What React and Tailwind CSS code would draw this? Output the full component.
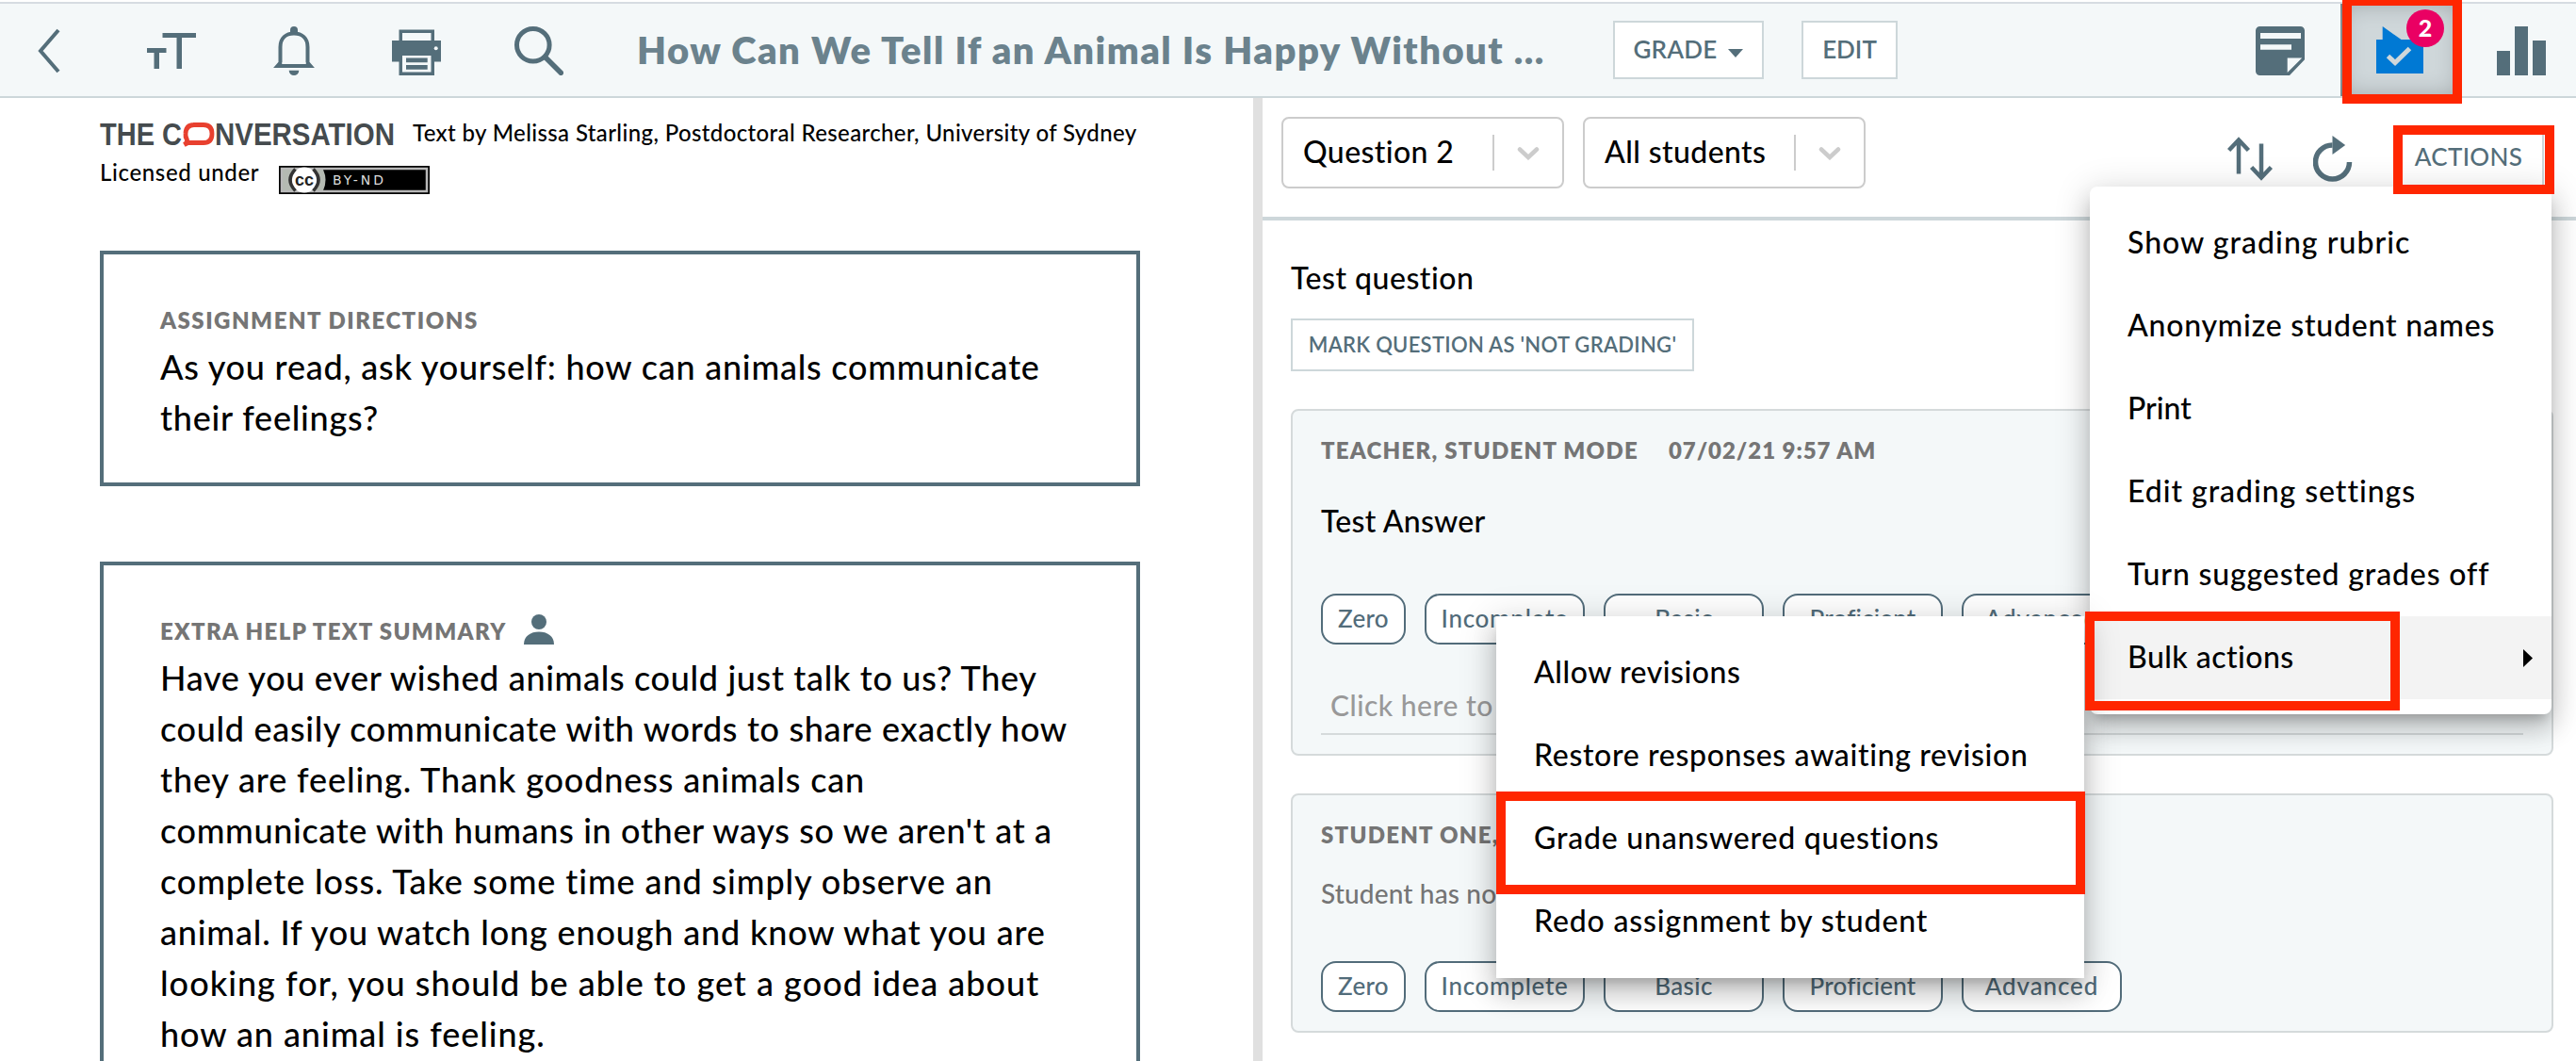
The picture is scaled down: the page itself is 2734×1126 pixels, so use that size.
import React, { useState } from 'react'
import clsx from 'clsx'

const summaryLines = [
  { text: 'Have you ever wished animals could just talk to us? They', tracking: 'tracking-[0.66px]' },
  { text: 'could easily communicate with words to share exactly how', tracking: 'tracking-[0.68px]' },
  { text: 'they are feeling. Thank goodness animals can', tracking: 'tracking-[0.87px]' },
  { text: "communicate with humans in other ways so we aren't at a", tracking: 'tracking-[0.65px]' },
  { text: 'complete loss. Take some time and simply observe an', tracking: 'tracking-[0.9px]' },
  { text: 'animal. If you watch long enough and know what you are', tracking: 'tracking-[0.82px]' },
  { text: 'looking for, you should be able to get a good idea about', tracking: 'tracking-[1.02px]' },
  { text: 'how an animal is feeling.', tracking: 'tracking-[0.94px]' },
]

const actionItems = [
  { label: 'Show grading rubric', tracking: 'tracking-[1.03px]' },
  { label: 'Anonymize student names', tracking: 'tracking-[0.78px]' },
  { label: 'Print', tracking: 'tracking-normal' },
  { label: 'Edit grading settings', tracking: 'tracking-[0.95px]' },
  { label: 'Turn suggested grades off', tracking: 'tracking-[0.85px]' },
  { label: 'Bulk actions', tracking: 'tracking-[0.45px]' },
]

const bulkItems = [
  { label: 'Allow revisions', tracking: 'tracking-[0.53px]' },
  { label: 'Restore responses awaiting revision', tracking: 'tracking-[0.66px]' },
  { label: 'Grade unanswered questions', tracking: 'tracking-[0.8px]' },
  { label: 'Redo assignment by student', tracking: 'tracking-[0.84px]' },
]

const grades = [
  { label: 'Zero', className: 'w-[90px] tracking-[0.3px]' },
  { label: 'Incomplete', className: 'w-[170px] tracking-[0.7px]' },
  { label: 'Basic', className: 'w-[170px] tracking-[0.4px]' },
  { label: 'Proficient', className: 'w-[170px] tracking-[0.2px]' },
  { label: 'Advanced', className: 'w-[170px] tracking-[0.9px]' },
]

const BackIcon = () => (
  <svg className="w-[26px] h-[50px]" viewBox="0 0 26 50" fill="none" stroke="currentColor" strokeWidth="4">
    <path d="M23 3 L4 25 L23 47" />
  </svg>
)

const TextSizeIcon = () => (
  <svg className="w-[52px] h-[52px]" viewBox="0 0 52 52" fill="currentColor">
    <path d="M16.5 7H52v5H37v33h-5.5V12h-15z" />
    <path d="M0 23h20.5v5H13v17H7.5V28H0z" />
  </svg>
)

const BellIcon = () => (
  <svg className="w-[44px] h-[52px]" viewBox="0 0 44 52">
    <path d="M18 8V4a4 4 0 0 1 8 0v4z" fill="currentColor" />
    <path d="M4.500 42L7.500 38.500V22C7.500 12.500 13.500 7.500 22 7.500S36.500 12.500 36.500 22V38.500L39.500 42Z" fill="none" stroke="currentColor" strokeWidth="4" />
    <path d="M0.500 44L6 38.500L10 40H34L38 38.500L43.500 44Z" fill="currentColor" />
    <path d="M9.500 38H34.500V39.800H9.500Z" className="fill-[#f4f8f9]" />
    <path d="M16.700 46.700H27.300a5.300 5.300 0 0 1-10.600 0z" fill="currentColor" />
  </svg>
)

const PrinterIcon = () => (
  <svg className="w-[52px] h-[52px]" viewBox="0 0 52 52">
    <path d="M7.500 3.500H45V15h7v22.500h-7V52H7.500V37.500H0V15h7.500z" fill="currentColor" />
    <path d="M11 7h30.500v8H11zM11 31h30.500v17.500H11z" className="fill-[#f4f8f9]" />
    <path d="M15 33.500h22.700v4.700H15zM15 41h22.700v4.700H15z" fill="currentColor" />
    <circle cx="46.700" cy="23.300" r="2" className="fill-[#f4f8f9]" />
  </svg>
)

const SearchIcon = () => (
  <svg className="w-[52px] h-[52px]" viewBox="0 0 52 52" fill="none" stroke="currentColor" strokeWidth="5">
    <circle cx="19.800" cy="19.800" r="17.300" />
    <path d="M33 33L49.300 49.300" strokeWidth="5.500" strokeLinecap="round" />
  </svg>
)

const NoteIcon = () => (
  <svg className="w-[52px] h-[52px]" viewBox="0 0 52 52">
    <path d="M4.500 0h43A4.500 4.500 0 0 1 52 4.500V35.300L36 52H4.500A4.500 4.500 0 0 1 0 47.500v-43A4.500 4.500 0 0 1 4.500 0z" fill="currentColor" />
    <path d="M5 7h43v6H5zM5 19.200h33v5.600H5zM33.700 33.500h15.500L33.700 49z" className="fill-[#f4f8f9]" />
  </svg>
)

const GradeTrayIcon = () => (
  <svg className="w-[50px] h-[50px]" viewBox="0 0 50 50">
    <path d="M0 14H6.700V0L26.500 14H50V50H0z" className="fill-[#0079d4]" />
    <path d="M12.500 31.500L20 38.500L35.500 23.500" fill="none" className="stroke-[#cfd7da]" strokeWidth="5" />
  </svg>
)

const BarsIcon = () => (
  <svg className="w-[52px] h-[52px]" viewBox="0 0 52 52" fill="currentColor">
    <path d="M0 26h14v26H0zM19 0h14v52H19zM38 15h14v37H38z" />
  </svg>
)

const SortIcon = () => (
  <svg className="w-[48px] h-[48px]" viewBox="0 0 48 48" fill="none" stroke="currentColor" strokeWidth="4.500">
    <path d="M12 39.500V3M1.600 14.500L12 3.500L22.400 14.500" />
    <path d="M36 7.500V44M25.600 32.500L36 43.500L46.400 32.500" />
  </svg>
)

const RefreshIcon = () => (
  <svg className="w-[42px] h-[50px]" viewBox="0 0 42 50">
    <path d="M38.500 28A18 18 0 1 1 20.500 10" fill="none" stroke="currentColor" strokeWidth="5.500" />
    <path d="M20.500 0L34.200 10L20.500 20z" fill="currentColor" />
  </svg>
)

const PersonIcon = () => (
  <svg className="w-[32px] h-[32px]" viewBox="0 0 32 32" fill="currentColor">
    <circle cx="16" cy="8" r="8" />
    <path d="M0 32C0 23 7 18.500 16 18.500S32 23 32 32z" />
  </svg>
)

const ConversationLogo = () => (
  <svg className="w-[312px] h-[24px] overflow-visible" viewBox="0 0 312 24">
    <g className="fill-[#454b4e] font-['Liberation_Sans',sans-serif] font-bold text-[33px]">
      <text x="0" y="23.800" textLength="87" lengthAdjust="spacingAndGlyphs">THE C</text>
      <text x="122" y="23.800" textLength="191" lengthAdjust="spacingAndGlyphs">NVERSATION</text>
    </g>
    <path d="M99 2.500H110Q119 2.500 119 12T110 21.500H93.500L89.500 23.500Q93 21 92.500 18.500Q90.500 15 91 11.500Q91.500 2.500 100 2.500" fill="none" className="stroke-[#e8402f]" strokeWidth="4.800" />
  </svg>
)

const LicenseBadge = () => (
  <svg className="w-[160px] h-[30px]" viewBox="0 0 160 30">
    <rect width="160" height="30" fill="#000" />
    <rect x="3" y="3" width="154" height="24" fill="none" className="stroke-[#b9b9b9]" strokeWidth="2.500" />
    <path d="M4 4H47Q52 15 47 26H4z" className="fill-[#b4bab2]" />
    <circle cx="27" cy="15" r="13.500" fill="#fff" />
    <path d="M17.500 3.500Q6.500 15 17.500 26.500M36.500 3.500Q47.500 15 36.500 26.500" fill="none" stroke="#333" strokeWidth="3.500" />
    <text x="17" y="20.500" textLength="20" className="fill-[#222] font-['Liberation_Sans',sans-serif] font-bold text-[18px]">cc</text>
    <text x="57" y="20" textLength="54" className="fill-[#ddd] font-['DejaVu_Sans',sans-serif] text-[14px]">BY-ND</text>
  </svg>
)

const Select = ({ label }) => (
  <div className="w-[300px] h-[76px] border-2 border-[#cccccc] rounded-lg bg-white flex items-center">
    <span className="flex-1 pl-[21px] pb-[2px] text-[32px] tracking-[0.4px]">{label}</span>
    <span className="w-[2px] h-[38px] bg-[#cccccc]" />
    <svg className="w-[24px] h-[14px] ml-[24px] mr-[24px] mt-[2px]" viewBox="0 0 24 14" fill="none" stroke="#ccc" strokeWidth="4.500" strokeLinecap="round">
      <path d="M3 2.500L12 11L21 2.500" />
    </svg>
  </div>
)

const GradeButtons = () => (
  <div className="flex gap-5">
    {grades.map((grade) => (
      <button
        key={grade.label}
        className={clsx('h-[54px] pb-px border-2 border-[#526c7a] rounded-2xl bg-white text-[#526c7a] text-[26px] whitespace-nowrap', grade.className)}
      >
        {grade.label}
      </button>
    ))}
  </div>
)

const TopBar = () => (
  <header className="h-[102px] shrink-0 flex items-center bg-[#f4f8f9] border-t-2 border-t-[#d6dce2] border-b-2 border-b-[#cdd7da] text-[#546e7a]">
    <div className="flex items-center pl-[39px] pt-[2px]">
      <BackIcon />
      <div className="flex items-center ml-[91px]">
        <TextSizeIcon />
        <div className="ml-[82px]"><BellIcon /></div>
        <div className="ml-[82px]"><PrinterIcon /></div>
        <div className="ml-[78px]"><SearchIcon /></div>
      </div>
    </div>
    <h1 className="ml-[78px] w-[1036px] shrink-0 text-[40px] font-extrabold tracking-[1.45px] text-[#6b828d] whitespace-nowrap">
      How Can We Tell If an Animal Is Happy Without ...
    </h1>
    <button className="w-[160px] h-[62px] pb-px pr-[1px] flex items-center justify-center border-2 border-[#cdd7da] bg-white text-[26px] font-semibold tracking-[0.2px]">
      GRADE
      <svg className="w-[16px] h-[9px] ml-[11px] mt-[7px]" viewBox="0 0 16 9" fill="currentColor">
        <path d="M0 0h16L8 9z" />
      </svg>
    </button>
    <button className="ml-10 w-[102px] h-[62px] pb-px border-2 border-[#cdd7da] bg-white text-[26px] font-semibold">EDIT</button>
    <div className="ml-auto h-full flex items-center pr-8">
      <div className="mt-[2px]"><NoteIcon /></div>
      <div className="relative ml-[38px] w-[126px] h-full pl-[38px] pt-6 bg-[#cfd7da] shadow-[inset_0_0_24px_rgba(0,0,0,0.25),inset_3px_0_0_#96a2a8]">
        <GradeTrayIcon />
        <span className="absolute left-[70px] top-[6px] w-10 h-10 rounded-full bg-[#ea0063] text-white text-[25px] leading-[39px] font-black text-center">2</span>
      </div>
      <div className="ml-10 mt-[2px]"><BarsIcon /></div>
    </div>
  </header>
)

const ReadingPane = () => (
  <section className="w-[1330px] shrink-0 pl-[106px] pt-4">
    <div className="text-[24px] leading-[42px] whitespace-nowrap">
      <div className="flex">
        <div className="pt-[10px]"><ConversationLogo /></div>
        <span className="ml-5 tracking-[0.37px]">Text by Melissa Starling, Postdoctoral Researcher, University of Sydney</span>
      </div>
      <div className="flex h-[42px]">
        <span className="w-[190px] tracking-[0.65px]">Licensed under</span>
        <div className="pt-[14px]"><LicenseBadge /></div>
      </div>
    </div>

    <div className="mt-[62px] w-[1104px] h-[250px] border-4 border-[#546e7a] px-[60px] pt-[55px] whitespace-nowrap">
      <h2 className="text-[24px] leading-[30px] font-extrabold tracking-[1.5px] text-[#757575]">ASSIGNMENT DIRECTIONS</h2>
      <p className="mt-[7px] text-[36px] leading-[54px] tracking-[0.77px]">
        As you read, ask yourself: how can animals communicate
        <br />
        their feelings?
      </p>
    </div>

    <div className="mt-20 w-[1104px] h-[700px] border-4 border-[#546e7a] px-[60px] pt-[55px] whitespace-nowrap">
      <div className="flex h-[30px] text-[#546e7a]">
        <h2 className="w-[386px] text-[24px] leading-[30px] font-extrabold tracking-[1.35px] text-[#757575]">EXTRA HELP TEXT SUMMARY</h2>
        <div className="-mt-[3px]"><PersonIcon /></div>
      </div>
      <div className="mt-[7px] text-[36px] leading-[54px]">
        {summaryLines.map((line) => <p key={line.text} className={line.tracking}>{line.text}</p>)}
      </div>
    </div>
  </section>
)

const GradingPane = () => (
  <section className="flex-1 min-w-0">
    <div className="h-[130px] border-b-4 border-[#cdd7da] pl-5 pr-[34px] pt-5 flex items-start text-[#546e7a]">
      <div className="flex gap-5 text-black">
        <Select label="Question 2" />
        <Select label="All students" />
      </div>
      <div className="ml-auto flex items-start">
        <div className="mt-[21px]"><SortIcon /></div>
        <div className="mt-5 ml-[43px]"><RefreshIcon /></div>
        <button className="mt-3 ml-[43px] w-[160px] h-[62px] pb-px border-2 border-[#cdd7da] bg-white text-[26px] font-medium tracking-[0.3px]">ACTIONS</button>
      </div>
    </div>

    <div className="pl-[30px] pr-6 pt-[41px]">
      <p className="text-[32px] leading-10 tracking-[0.5px]">Test question</p>
      <button className="mt-[23px] w-[428px] h-14 pb-px border-2 border-[#cdd7da] text-[22px] font-semibold tracking-[0.28px] text-[#546e7a] whitespace-nowrap">
        MARK QUESTION AS 'NOT GRADING'
      </button>

      <article className="mt-10 h-[368px] border-2 border-[#d5dadb] rounded-lg bg-[#f4f8f9] px-[30px] pt-7">
        <h3 className="flex gap-8 text-[24px] leading-7 font-extrabold text-[#757575]">
          <span className="tracking-[1.25px]">TEACHER, STUDENT MODE</span>
          <span className="tracking-[0.95px]">07/02/21 9:57 AM</span>
        </h3>
        <p className="mt-[41px] mb-[57px] text-[32px] leading-10 tracking-[0.25px]">Test Answer</p>
        <GradeButtons />
        <div className="mt-11 pl-[10px] pb-[10px] border-b-2 border-[#d5dadb] text-[30px] leading-10 tracking-[0.5px] text-[#999]">Click here to comment</div>
      </article>

      <article className="mt-10 h-[254px] border-2 border-[#d5dadb] rounded-lg bg-[#f4f8f9] px-[30px] pt-7">
        <h3 className="text-[24px] leading-7 font-extrabold tracking-[1.25px] text-[#757575]">STUDENT ONE, TEST</h3>
        <p className="mt-[30px] mb-[54px] text-[28px] leading-9 tracking-[0.15px] text-[#757575]">Student has not answered</p>
        <GradeButtons />
      </article>
    </div>
  </section>
)

const menuShadow = 'shadow-[0_10px_12px_-6px_rgba(0,0,0,0.2),0_16px_24px_2px_rgba(0,0,0,0.14),0_6px_36px_4px_rgba(0,0,0,0.14)]'

const App = () => {
  const [active, setActive] = useState('Bulk actions')

  return (
    <div className="relative w-[2734px] h-[1126px] overflow-hidden bg-white pt-[2px] flex flex-col text-black font-['Lato',sans-serif] font-medium">
      <TopBar />
      <main className="flex-1 min-h-0 flex overflow-hidden">
        <ReadingPane />
        <div className="w-[10px] shrink-0 bg-[#e0e0e0]" />
        <GradingPane />
      </main>

      {/* Actions menu */}
      <ul className={clsx('absolute left-[2218px] top-[198px] w-[490px] py-4 bg-white rounded-lg', menuShadow)}>
        {actionItems.map(({ label, tracking }) => (
          <li
            key={label}
            onMouseEnter={() => setActive(label)}
            className={clsx('h-[88px] pl-[40px] pr-5 pb-[2px] flex items-center justify-between text-[32px] whitespace-nowrap', tracking, label === active && 'bg-[#f3f3f3]')}
          >
            {label}
            {label === 'Bulk actions' && (
              <svg className="w-[10px] h-[19px] mt-[2px]" viewBox="0 0 10 19"><path d="M0 0L10 9.500L0 19z" /></svg>
            )}
          </li>
        ))}
      </ul>

      {/* Bulk actions submenu */}
      <ul className={clsx('absolute left-[1588px] top-[654px] w-[624px] py-4 bg-white', menuShadow)}>
        {bulkItems.map(({ label, tracking }) => (
          <li key={label} className={clsx('h-[88px] pl-[40px] pb-[2px] flex items-center text-[32px] whitespace-nowrap', tracking)}>{label}</li>
        ))}
      </ul>

      {/* Highlights */}
      <div className="absolute left-[2486px] -top-1 w-[127px] h-[114px] border-10 border-[#ff2600]" />
      <div className="absolute left-[2540px] top-[133px] w-[171px] h-[73px] border-10 border-[#ff2600]" />
      <div className="absolute left-[2213px] top-[649px] w-[334px] h-[105px] border-10 border-[#ff2600]" />
      <div className="absolute left-[1588px] top-[840px] w-[625px] h-[109px] border-10 border-[#ff2600]" />
    </div>
  )
}

export default App
